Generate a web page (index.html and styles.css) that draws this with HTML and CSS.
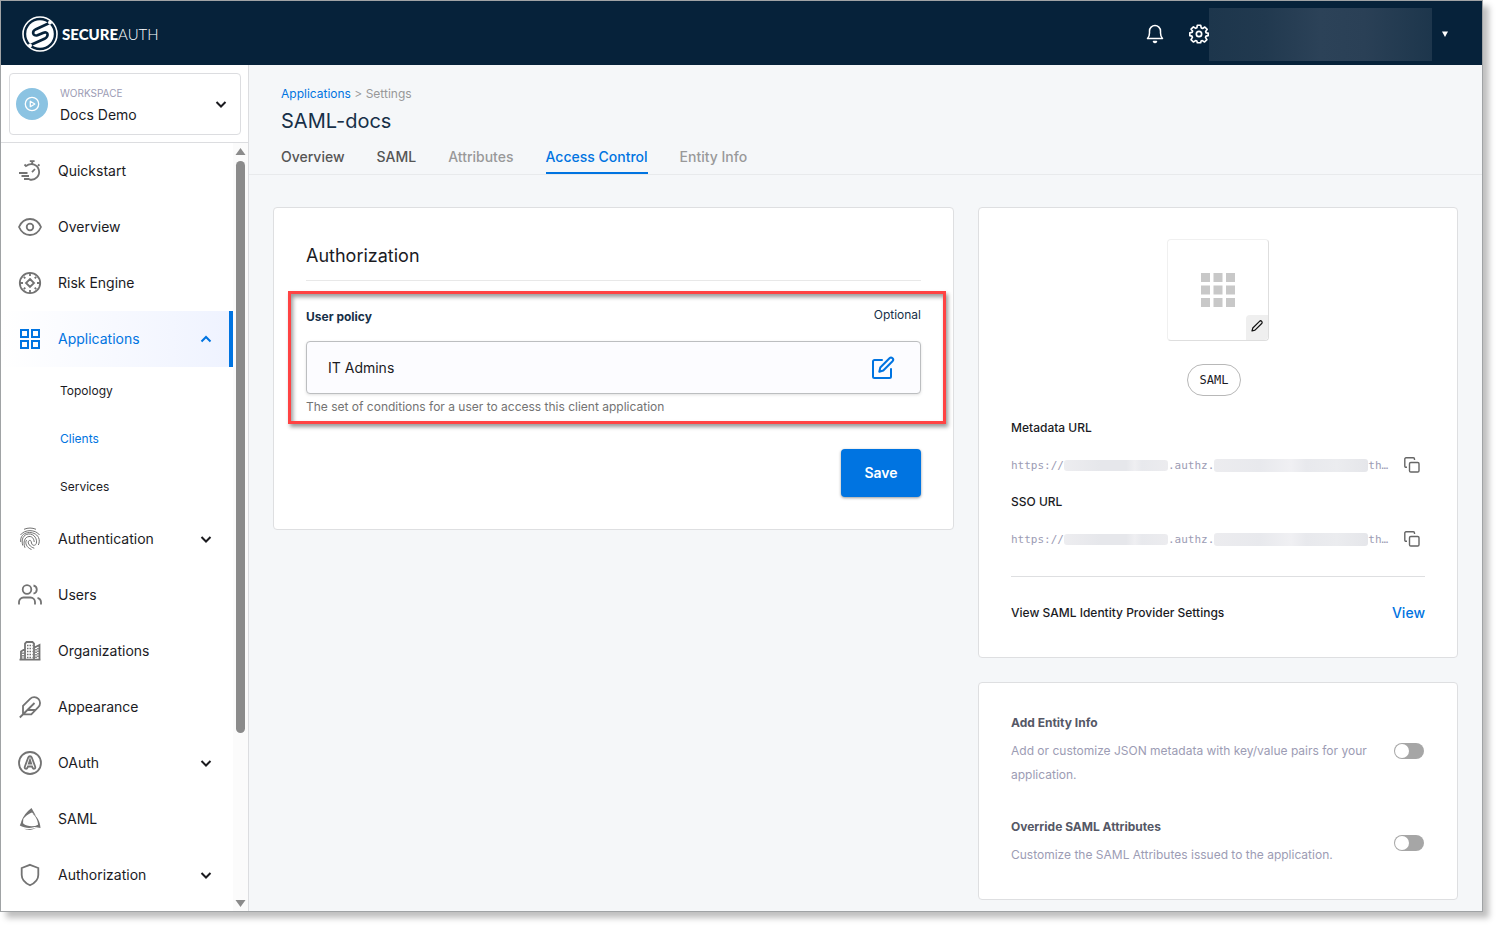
FILE: index.html
```html
<!DOCTYPE html>
<html lang="en">
<head>
    <meta charset="UTF-8">
    <meta name="viewport" content="width=device-width, initial-scale=1.0">
    <title>SAML-docs - Access Control</title>
    <link rel="stylesheet" href="styles.css">
</head>
<body>
    <div class="window">
        <header class="topbar">
            <a href="#" class="logo">
                <svg width="36" height="36" viewBox="0 0 36 36" fill="none">
                    <circle cx="18" cy="18" r="17" stroke="#fff" stroke-width="1.6"/>
                    <circle cx="18" cy="18" r="13.800" fill="#fff"/>
                    <path d="M28.500 6.500 14 13.200C9.500 15.500 10.500 20.500 15.500 19.300L21.500 16.700C26.500 15 27 20.500 22.500 22.800L7.500 29.500" stroke="#06223a" stroke-width="2.600"/>
                    <circle cx="28" cy="6.500" r="2" fill="#fff"/>
                    <circle cx="8" cy="29.500" r="2" fill="#fff"/>
                </svg>
                <span class="logo-text"><b>SECURE</b>AUTH</span>
            </a>
            <div class="topbar-actions">
                <button class="icon-btn" aria-label="Notifications">
                    <svg width="20" height="20" viewBox="0 0 20 20" fill="none" stroke="#fff" stroke-width="1.500" stroke-linecap="round" stroke-linejoin="round">
                        <path d="M2.500 14.500h15c-1.600-1.500-2-3-2-5.500V7a5.500 5.500 0 0 0-11 0v2c0 2.500-.400 4-2 5.500z"/>
                        <path d="M8.500 17.500c.800 1.200 2.200 1.200 3 0z"/>
                    </svg>
                </button>
                <button class="icon-btn" aria-label="Settings">
                    <svg width="20" height="20" viewBox="0 0 24 24" fill="none" stroke="#fff" stroke-width="2" stroke-linejoin="round">
                        <path d="M10 1.500h4l.7 3.200 1.600.7 2.700-1.800 2.800 2.800L20 9.100l.6 1.500 2.400.4v3l-2.600.6-.6 1.500 1.700 2.700-2.800 2.800-2.700-1.700-1.500.6-.5 2h-4l-.6-2-1.500-.6-2.700 1.700-2.800-2.800 1.700-2.700-.6-1.500L1 14v-3.500l2.700-.5.6-1.500-1.800-2.300 2.800-2.800 2.700 1.800 1.400-.6z"/>
                        <circle cx="12" cy="12" r="3.200"/>
                    </svg>
                </button>
                <div class="account"></div>
                <button class="icon-btn account-caret" aria-label="Account menu">
                    <svg width="6" height="6" viewBox="0 0 6 6"><path d="M0 .5h6L3 6z" fill="#fff"/></svg>
                </button>
            </div>
        </header>

        <div class="layout">
            <aside class="sidebar">
                <div class="workspace-wrap">
                    <button class="workspace">
                        <span class="workspace-icon">
                            <svg width="16" height="16" viewBox="0 0 16 16" fill="none" stroke="#fff" stroke-width="1.300" stroke-linejoin="round"><circle cx="8" cy="8" r="6.700"/><path d="M6.300 5.300v5.400L10.800 8z"/></svg>
                        </span>
                        <span class="workspace-text">
                            <small>WORKSPACE</small>
                            <span>Docs Demo</span>
                        </span>
                        <svg class="chevron" width="12" height="12" viewBox="0 0 12 12"><path d="M1.500 4 6 8.500 10.500 4"/></svg>
                    </button>
                </div>
                <div class="nav-wrap">
                    <nav class="nav">
                        <a href="#" class="nav-item">
                            <svg class="nav-icon" viewBox="0 0 24 24"><path d="M8 7.200a7.800 7.800 0 1 1 3.500 13.300M14.200 2.500v2.800M11.800 2.200h4.800M6.500 5.500l2 2M20 5.500l1.500 1.300M14 13.200l3-3.200M1 14h8.500M3.500 17h7.500M6 20h5.500"/></svg>
                            <span>Quickstart</span>
                        </a>
                        <a href="#" class="nav-item">
                            <svg class="nav-icon" viewBox="0 0 24 24"><path d="M1 12c2-4.500 6-8 11-8s9 3.500 11 8c-2 4.500-6 8-11 8s-9-3.500-11-8z"/><circle cx="12" cy="12" r="3.300"/></svg>
                            <span>Overview</span>
                        </a>
                        <a href="#" class="nav-item">
                            <svg class="nav-icon" viewBox="0 0 24 24"><circle cx="12" cy="12" r="10.200"/><path d="M12 8l4 4-4 4-4-4zM12 2v3M12 19v3M2 12h3M19 12h3M5.800 5.800l1.500 1.500M16.700 16.700l1.500 1.500M18.200 5.800l-1.500 1.500M7.300 16.700l-1.500 1.500"/></svg>
                            <span>Risk Engine</span>
                        </a>
                        <a href="#" class="nav-item active">
                            <svg class="nav-icon" viewBox="0 0 24 24"><path d="M3 3h7v7H3zM14 3h7v7h-7zM3 14h7v7H3zM14 14h7v7h-7z"/></svg>
                            <span>Applications</span>
                            <svg class="chevron" width="12" height="12" viewBox="0 0 12 12"><path d="M1.500 8.500 6 4l4.500 4.500"/></svg>
                        </a>
                        <div class="subnav">
                            <a href="#">Topology</a>
                            <a href="#" class="current">Clients</a>
                            <a href="#">Services</a>
                        </div>
                        <a href="#" class="nav-item">
                            <svg class="nav-icon thin" viewBox="0 0 24 24"><path d="M6 2.300c4-1.700 8-1.700 12 0M2.500 8C6.500 2.200 17.500 2.200 21.500 8M2.700 15C1.500 3.500 17 3 20.500 10.500c1.200 2.500 1 5-.2 7.500M4.700 18.500C3 12 5.500 7.500 10.500 7c6-.5 9 5.500 7.800 9.500-.8 2.500-4.300 2.500-4.800-.500-.200-2-.8-3-2.200-2.500-2.800 1.200.2 6.500 5 7.700M7 20.800C4.800 15.500 6.500 10 11 9.500c3.500-.3 5 2.500 5.200 5.500M13.500 22.500c-5-2-6.800-6.500-5-9.500"/></svg>
                            <span>Authentication</span>
                            <svg class="chevron" width="12" height="12" viewBox="0 0 12 12"><path d="M1.500 4 6 8.500 10.500 4"/></svg>
                        </a>
                        <a href="#" class="nav-item">
                            <svg class="nav-icon" viewBox="0 0 24 24"><circle cx="9" cy="6.500" r="4.300"/><path d="M1 21.500V19a4.500 4.500 0 0 1 4.500-4.500h7A4.500 4.500 0 0 1 17 19v2.500M15.500 2.500a4.200 4.200 0 0 1 0 8.200M19.500 14.800A4.500 4.500 0 0 1 23 19v2.500"/></svg>
                            <span>Users</span>
                        </a>
                        <a href="#" class="nav-item">
                            <svg class="nav-icon" viewBox="0 0 24 24"><path d="M1.500 20.700h21M3 20.500v-8l4-2.500M7 20.500V4.500L8.500 3h6L16 4.500v16M16.500 8.500 21.500 6v14.500"/><path class="dots" d="M9 6.500h5.500M9 9.500h5.500M9 12.500h5.500M9 15.500h5.500M9 18.500h5.500M18 10v9M20 9v10M5 13.500v6"/></svg>
                            <span>Organizations</span>
                        </a>
                        <a href="#" class="nav-item">
                            <svg class="nav-icon" viewBox="0 0 24 24"><path d="M20.300 12.200a5.800 5.800 0 0 0-8.200-8.400L5 10.800v8.500h8.300zM16.500 8 1.800 22.500M17.500 15H9"/></svg>
                            <span>Appearance</span>
                        </a>
                        <a href="#" class="nav-item">
                            <svg class="nav-icon" viewBox="0 0 24 24"><circle cx="12" cy="12" r="11"/><path d="M10.300 6.200c.5-1.300 2.900-1.300 3.400 0l3.500 9.500c.7 2.200-2 2.800-2.700 1l-.5-1.200h-4l-.5 1.200c-.7 1.800-3.400 1.200-2.700-1zM12 9l-1.200 3.700h2.400z"/></svg>
                            <span>OAuth</span>
                            <svg class="chevron" width="12" height="12" viewBox="0 0 12 12"><path d="M1.500 4 6 8.500 10.500 4"/></svg>
                        </a>
                        <a href="#" class="nav-item">
                            <svg class="nav-icon solid" viewBox="0 0 24 24"><path d="M13.500 1 18 9l-4-3.500C9 7 5.500 11.500 3 15 5 9.500 8.500 4.500 13.500 1zM1.800 18.500 5.500 9.500 5 16.300C9 20 15 19.500 19.500 18.500 14.500 22 7 21.500 1.800 18.500zM22.500 21l-7-1.300 4.500-2C20 13 17.500 9.500 14.500 6.500c4.500 2.500 7.700 8 8 14.500zM6 21.800c4.500.8 8.500.3 12.500-1.300-3.500 2.500-8.500 3.300-12.500 1.300z"/></svg>
                            <span>SAML</span>
                        </a>
                        <a href="#" class="nav-item">
                            <svg class="nav-icon" viewBox="0 0 24 24"><path d="M12 1.800 20.300 5v7c0 5-3.800 8.200-8.300 10.300C7.500 20.200 3.700 17 3.700 12V5z"/></svg>
                            <span>Authorization</span>
                            <svg class="chevron" width="12" height="12" viewBox="0 0 12 12"><path d="M1.500 4 6 8.500 10.500 4"/></svg>
                        </a>
                    </nav>
                    <div class="scrollbar">
                        <svg width="11" height="8" viewBox="0 0 11 8"><path d="M5.500 0 10.500 7H.5z"/></svg>
                        <div class="scroll-track"><div class="scroll-thumb"></div></div>
                        <svg width="11" height="8" viewBox="0 0 11 8"><path d="M5.500 8 10.500 1H.5z"/></svg>
                    </div>
                </div>
            </aside>

            <main class="main">
                <div class="page-head">
                    <div class="breadcrumb"><a href="#">Applications</a> &gt; Settings</div>
                    <h1>SAML-docs</h1>
                    <nav class="tabs">
                        <a href="#">Overview</a>
                        <a href="#">SAML</a>
                        <a href="#" class="muted">Attributes</a>
                        <a href="#" class="selected">Access Control</a>
                        <a href="#" class="muted">Entity Info</a>
                    </nav>
                </div>

                <div class="content">
                    <form class="card">
                        <h2>Authorization</h2>
                        <div class="highlight">
                            <div class="field-head">
                                <label for="policy">User policy</label>
                                <span>Optional</span>
                            </div>
                            <div class="field">
                                <input type="text" id="policy" value="IT Admins" readonly>
                                <button type="button" class="icon-btn" aria-label="Edit policy">
                                    <svg width="24" height="24" viewBox="0 0 24 24" fill="none" stroke="#0074e1" stroke-width="2" stroke-linecap="round" stroke-linejoin="round">
                                        <path d="M11 4H3.500A1.500 1.500 0 0 0 2 5.500v15A1.500 1.500 0 0 0 3.500 22h15a1.500 1.500 0 0 0 1.500-1.500V13"/>
                                        <path d="M18.500 2.300a2.100 2.100 0 0 1 3 3L12.300 14.500l-4 1.200 1-4.200z"/>
                                    </svg>
                                </button>
                            </div>
                            <p class="help">The set of conditions for a user to access this client application</p>
                        </div>
                        <button type="button" class="save">Save</button>
                    </form>

                    <div class="side">
                        <section class="card">
                            <div class="app-logo">
                                <svg width="34" height="34" viewBox="0 0 34 34" fill="#c8c8c8"><path d="M0 0h9v9H0zM12.500 0h9v9h-9zM25 0h9v9h-9zM0 12.500h9v9H0zM12.500 12.500h9v9h-9zM25 12.500h9v9h-9zM0 25h9v9H0zM12.500 25h9v9h-9zM25 25h9v9h-9z"/></svg>
                                <button class="logo-edit" aria-label="Edit logo">
                                    <svg width="12" height="12" viewBox="0 0 12 12" fill="none" stroke="#111" stroke-width="1.200" stroke-linejoin="round"><path d="M8.500 1.300a1.500 1.500 0 0 1 2.200 2.200L4 10.200l-3 .8.800-3z"/></svg>
                                </button>
                            </div>
                            <div class="pill">SAML</div>
                            <div class="url-label">Metadata URL</div>
                            <div class="url-row">
                                <span class="url">https://<i class="redacted"></i>.authz.<i class="redacted wide"></i>th…</span>
                                <button class="icon-btn" aria-label="Copy metadata URL">
                                    <svg width="16" height="16" viewBox="0 0 16 16" fill="none" stroke="#666" stroke-width="1.400" stroke-linejoin="round"><rect x="5.500" y="5.500" width="9.500" height="9.500" rx="1.300"/><path d="M3 10.300H2A1.200 1.200 0 0 1 .8 9V2A1.200 1.200 0 0 1 2 .8h7.300A1.200 1.200 0 0 1 10.500 2v1"/></svg>
                                </button>
                            </div>
                            <div class="url-label">SSO URL</div>
                            <div class="url-row">
                                <span class="url">https://<i class="redacted"></i>.authz.<i class="redacted wide"></i>th…</span>
                                <button class="icon-btn" aria-label="Copy SSO URL">
                                    <svg width="16" height="16" viewBox="0 0 16 16" fill="none" stroke="#666" stroke-width="1.400" stroke-linejoin="round"><rect x="5.500" y="5.500" width="9.500" height="9.500" rx="1.300"/><path d="M3 10.300H2A1.200 1.200 0 0 1 .8 9V2A1.200 1.200 0 0 1 2 .8h7.300A1.200 1.200 0 0 1 10.500 2v1"/></svg>
                                </button>
                            </div>
                            <div class="view-row">
                                <span>View SAML Identity Provider Settings</span>
                                <a href="#">View</a>
                            </div>
                        </section>

                        <section class="card options">
                            <div class="option">
                                <div>
                                    <label for="entity-info">Add Entity Info</label>
                                    <p>Add or customize JSON metadata with key/value pairs for your application.</p>
                                </div>
                                <input type="checkbox" class="switch" id="entity-info">
                            </div>
                            <div class="option">
                                <div>
                                    <label for="override">Override SAML Attributes</label>
                                    <p>Customize the SAML Attributes issued to the application.</p>
                                </div>
                                <input type="checkbox" class="switch" id="override">
                            </div>
                        </section>
                    </div>
                </div>
            </main>
        </div>
    </div>
</body>
</html>
```
FILE: styles.css
```css
* {
    box-sizing: border-box;
}

body {
    margin: 0;
    padding: 0 15px 15px 0;
    background: #fff;
    font-family: Inter, sans-serif;
    font-size: 14px;
    color: #1b1b1f;
}

h1, h2, p {
    margin: 0;
}

a {
    color: #0074e1;
    text-decoration: none;
}

button {
    font-family: inherit;
    cursor: pointer;
}

svg {
    display: block;
    flex-shrink: 0;
}

.window {
    display: flex;
    flex-direction: column;
    min-height: calc(100vh - 15px);
    border: 1px solid #a0a3a5;
    box-shadow: 6px 6px 6px rgba(0, 0, 0, 0.25);
}

.icon-btn {
    padding: 0;
    border: none;
    background: none;
}

/* top bar */
.topbar {
    display: flex;
    align-items: center;
    justify-content: space-between;
    height: 64px;
    padding: 0 34px 0 21px;
    background: #06223a;
}

.logo {
    display: flex;
    align-items: center;
    gap: 4px;
    margin-top: 2px;
    color: #fff;
}

.logo-text {
    font-family: Lato, sans-serif;
    font-size: 15px;
    font-weight: 300;
}

.logo-text b {
    font-weight: 900;
}

.topbar-actions {
    display: flex;
    align-items: center;
    padding-top: 2px;
}

.topbar-actions .icon-btn + .icon-btn {
    margin-left: 24px;
}

.account {
    width: 223px;
    height: 53px;
    background: linear-gradient(90deg, #1d364c, #21394f 25%, #2c4258 50%, #2a4056 70%, #1d364c);
}

.account-caret {
    margin-left: 10px;
}

/* sidebar */
.layout {
    display: flex;
    flex: 1;
}

.sidebar {
    display: flex;
    flex-direction: column;
    flex-shrink: 0;
    width: 248px;
    border-right: 1px solid #dcdde0;
    background: #fff;
}

.workspace-wrap {
    padding: 8px 7px 7px 8px;
    border-bottom: 1px solid #dcdde0;
}

.workspace {
    display: flex;
    align-items: center;
    gap: 12px;
    width: 100%;
    height: 62px;
    padding: 0 13px 0 6px;
    border: 1px solid #dcdde0;
    border-radius: 4px;
    background: #fff;
    color: #1b1b1f;
    font-size: 14px;
    text-align: left;
}

.workspace-icon {
    display: flex;
    align-items: center;
    justify-content: center;
    width: 32px;
    height: 32px;
    border-radius: 50%;
    background: #8bc3e2;
}

.workspace-text {
    display: flex;
    flex: 1;
    flex-direction: column;
    padding-top: 2px;
    line-height: 24px;
}

.workspace-text small {
    color: #9c9cb4;
    font-size: 10px;
    line-height: 20px;
}

.chevron {
    fill: none;
    stroke: currentColor;
    stroke-width: 2;
}

.nav-wrap {
    display: flex;
    flex: 1;
}

.nav {
    flex: 1;
}

.nav-item {
    display: flex;
    align-items: center;
    gap: 16px;
    height: 56px;
    padding: 0 21px 0 17px;
    color: #1b1b1f;
    line-height: 16px;
}

.nav-item .chevron {
    margin-left: auto;
}

.nav-item.active {
    padding-right: 17px;
    border-right: 4px solid #0074e1;
    background: linear-gradient(90deg, #fff, #eff3ff);
    color: #0074e1;
}

.nav-icon {
    width: 24px;
    height: 24px;
    fill: none;
    stroke: #737373;
    stroke-width: 1.8;
}

.nav-icon.thin {
    stroke-width: 1;
}

.nav-icon.solid {
    fill: #737373;
    stroke: none;
}

.nav-icon .dots {
    stroke-width: 1.6;
    stroke-dasharray: 1.5 1;
}

.active .nav-icon {
    stroke: #0074e1;
    stroke-width: 2;
}

.subnav a {
    display: block;
    padding-left: 59px;
    color: #1b1b1f;
    font-size: 12px;
    line-height: 48px;
}

.subnav a.current {
    color: #0074e1;
}

.scrollbar {
    display: flex;
    flex-direction: column;
    align-items: center;
    width: 15px;
    padding: 5px 0 4px;
    background: #fbfbfb;
    fill: #8b8b8b;
}

.scroll-track {
    flex: 1;
    padding: 5px 0;
}

.scroll-thumb {
    width: 9px;
    height: 78%;
    border-radius: 5px;
    background: #8b8b8b;
}

/* main */
.main {
    flex: 1;
    min-width: 0;
    background: #f5f7f9;
}

.page-head {
    padding: 17px 32px 0;
    border-bottom: 1px solid #e8eaec;
}

.breadcrumb {
    color: #989898;
    font-size: 12px;
    line-height: 24px;
}

h1 {
    color: #173048;
    font-size: 20px;
    font-weight: 400;
    line-height: 30px;
}

.tabs {
    display: flex;
    gap: 32px;
    margin-top: 5px;
}

.tabs a {
    height: 33px;
    border-bottom: 2px solid transparent;
    color: #555;
    font-weight: 500;
    line-height: 32px;
}

.tabs a.muted {
    color: #999;
}

.tabs a.selected {
    border-color: #0074e1;
    color: #0074e1;
}

.content {
    display: grid;
    grid-template-columns: minmax(0, 1fr) 480px;
    align-items: start;
    gap: 24px;
    padding: 32px 24px 10px;
}

.card {
    padding: 32px;
    border: 1px solid #dedfe1;
    border-radius: 4px;
    background: #fff;
}

h2 {
    padding-bottom: 8px;
    border-bottom: 1px solid #e8e8e8;
    font-size: 18px;
    font-weight: 400;
    line-height: 32px;
}

.highlight {
    margin: 10px -25px 25px -18px;
    padding: 13px 22px 2px 15px;
    border: 3px solid #ff4343;
    box-shadow: 2px 3px 4px rgba(0, 0, 0, 0.4), inset 2px 3px 4px rgba(0, 0, 0, 0.4);
}

.field-head {
    display: flex;
    justify-content: space-between;
    margin-bottom: 14px;
    color: #173048;
    font-size: 12px;
    line-height: 20px;
}

.field-head label {
    font-weight: 700;
}

.field-head span {
    line-height: 16px;
}

.field {
    display: flex;
    align-items: center;
    height: 53px;
    padding: 0 25px 0 21px;
    border: 1px solid #bcbec0;
    border-radius: 4px;
    background: #fcfcff;
    box-shadow: 0 1px 3px rgba(0, 0, 0, 0.12);
}

.field input {
    flex: 1;
    padding: 0;
    border: none;
    outline: none;
    background: none;
    color: #1b1b1f;
    font-family: inherit;
    font-size: 14px;
}

.help {
    color: #737373;
    font-size: 12px;
    line-height: 25px;
}

.save {
    display: block;
    width: 80px;
    height: 48px;
    margin-left: auto;
    border: none;
    border-radius: 4px;
    background: #0074e1;
    box-shadow: 0 1px 3px rgba(0, 0, 0, 0.4);
    color: #fff;
    font-size: 14px;
    font-weight: 600;
    line-height: 16px;
}

.side {
    display: grid;
    gap: 24px;
}

.app-logo {
    position: relative;
    display: flex;
    align-items: center;
    justify-content: center;
    width: 102px;
    height: 102px;
    margin: -1px auto 0;
    border: 1px solid #f0f0f0;
    border-right-color: #dedede;
    border-bottom-color: #dedede;
    border-radius: 4px;
    background: #fff;
}

.logo-edit {
    position: absolute;
    right: 0;
    bottom: 0;
    display: flex;
    align-items: center;
    justify-content: center;
    width: 22px;
    height: 25px;
    padding: 0 0 3px;
    border: none;
    border-radius: 4px 0 4px 0;
    background: #efefef;
}

.pill {
    width: 54px;
    margin: 23px auto 20px 176px;
    border: 1px solid #b8b8b8;
    border-radius: 16px;
    font-family: "DejaVu Sans Mono", monospace;
    font-size: 12px;
    line-height: 30px;
    text-align: center;
}

.url-label {
    font-size: 12px;
    font-weight: 500;
    line-height: 24px;
}

.url-row {
    display: flex;
    align-items: center;
    justify-content: space-between;
    height: 50px;
    padding-right: 5px;
}

.url {
    display: flex;
    align-items: center;
    color: #9c9cb4;
    font-family: "DejaVu Sans Mono", monospace;
    font-size: 11px;
}

.redacted {
    width: 104px;
    height: 11px;
    border-radius: 3px;
    background: linear-gradient(90deg, #ededf0, #e6e7eb 35%, #e6e7eb 60%, #efeff2 68%, #e8e9ed 75%, #ececef);
}

.redacted.wide {
    width: 154px;
    height: 13px;
    background: linear-gradient(90deg, #ececef, #e8e9ed 30%, #f0f0f3 50%, #e8e9ed 60%, #ebecef 80%, #e5e6ea);
}

.view-row {
    display: flex;
    justify-content: space-between;
    margin-top: 12px;
    padding-top: 24px;
    border-top: 1px solid #dedfe1;
    font-size: 12px;
    font-weight: 500;
    line-height: 24px;
}

.view-row a {
    font-size: 14px;
}

.options {
    display: grid;
    gap: 32px;
}

.option {
    display: flex;
    align-items: center;
    justify-content: space-between;
    gap: 24px;
    padding-right: 1px;
    font-size: 12px;
}

.option label {
    display: block;
    margin-bottom: 8px;
    color: #555866;
    font-weight: 700;
    line-height: 16px;
}

.option p {
    color: #9c9cb4;
    line-height: 24px;
}

.switch {
    appearance: none;
    flex-shrink: 0;
    width: 30px;
    height: 16px;
    margin: 0;
    border-radius: 8px;
    background: #a6a6a6;
    cursor: pointer;
}

.switch::before {
    content: "";
    display: block;
    width: 14px;
    height: 14px;
    margin: 1px;
    border-radius: 50%;
    background: #fff;
}

.switch:checked {
    background: #0074e1;
}

.switch:checked::before {
    margin-left: 15px;
}
```
